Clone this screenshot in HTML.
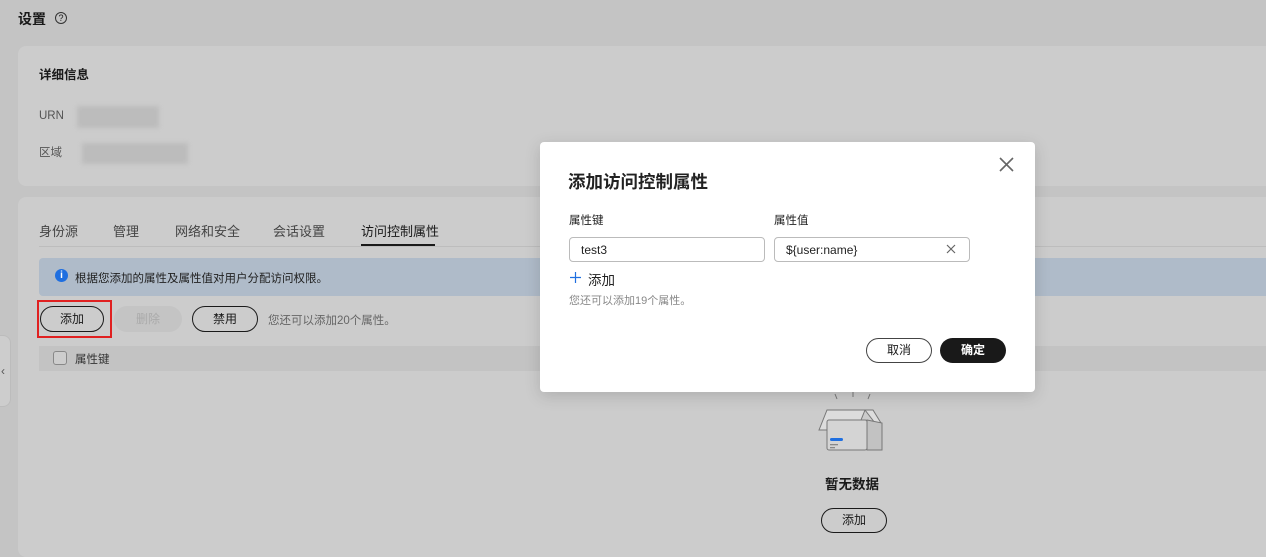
<!DOCTYPE html>
<html><head><meta charset="utf-8"><style>
*{margin:0;padding:0;box-sizing:border-box}
body{width:1266px;height:539px;overflow:hidden;background:#c4c4c4;font-family:"Liberation Sans","Noto Sans CJK SC",sans-serif;color:#191919;position:relative;font-size:12px}
.a{position:absolute}
.card{background:#cccccc;border-radius:8px}
.blur{background:#bcbcbc;filter:blur(2px)}
.btn{border:1px solid #1a1a1a;border-radius:14px;text-align:center;font-size:12px}
.tab{font-size:13px;color:#444;top:221px}
</style></head><body>
<div class="a" style="left:18px;top:9px;font-size:14px;font-weight:bold">设置</div>
<div class="a" style="left:55px;top:12px;width:12px;height:12px;border:1px solid #333;border-radius:50%;font-size:9px;line-height:10px;text-align:center">?</div>

<div class="a card" style="left:18px;top:46px;width:1260px;height:140px"></div>
<div class="a" style="left:39px;top:64px;font-size:12.5px;font-weight:bold">详细信息</div>
<div class="a" style="left:39px;top:110px;color:#555;font-size:11.5px">URN</div>
<div class="a blur" style="left:77px;top:106px;width:82px;height:22px"></div>
<div class="a" style="left:39px;top:144px;color:#555;font-size:11.5px">区域</div>
<div class="a blur" style="left:82px;top:143px;width:106px;height:21px"></div>

<div class="a card" style="left:18px;top:197px;width:1260px;height:360px"></div>
<div class="a tab" style="left:39px">身份源</div>
<div class="a tab" style="left:113px">管理</div>
<div class="a tab" style="left:175px">网络和安全</div>
<div class="a tab" style="left:273px">会话设置</div>
<div class="a tab" style="left:361px;color:#191919">访问控制属性</div>
<div class="a" style="left:39px;top:246px;width:1227px;height:1px;background:#bdbdbd"></div>
<div class="a" style="left:361px;top:244px;width:74px;height:2px;background:#191919"></div>
<div class="a" style="left:39px;top:258px;width:1227px;height:38px;background:#afbbc9;border-radius:4px 0 0 4px"></div>
<div class="a" style="left:55px;top:269px;width:13px;height:13px;border-radius:50%;background:#1f6fe0;color:#fff;font-size:10px;font-weight:bold;text-align:center;line-height:13px">i</div>
<div class="a" style="left:75px;top:270px;font-size:11.5px;color:#222">根据您添加的属性及属性值对用户分配访问权限。</div>
<div class="a" style="left:37px;top:300px;width:75px;height:38px;border:2px solid #e02020"></div>
<div class="a btn" style="left:40px;top:306px;width:64px;height:26px;line-height:24px">添加</div>
<div class="a" style="left:114px;top:306px;width:68px;height:26px;border-radius:14px;background:#c4c4c4;color:#aaa;text-align:center;line-height:26px">删除</div>
<div class="a btn" style="left:192px;top:306px;width:66px;height:26px;line-height:24px">禁用</div>
<div class="a" style="left:268px;top:312px;color:#666;font-size:11.5px">您还可以添加20个属性。</div>
<div class="a" style="left:39px;top:346px;width:1227px;height:25px;background:#c3c3c3"></div>
<div class="a" style="left:53px;top:351px;width:14px;height:14px;border:1px solid #888;border-radius:3px;background:#cdcdcd"></div>
<div class="a" style="left:75px;top:351px;color:#333;font-size:11.5px">属性键</div>
<div class="a" style="left:-10px;top:335px;width:21px;height:72px;background:#cdcdcd;border-radius:8px;border:1px solid #bcbcbc"></div>
<div class="a" style="left:1px;top:364px;font-size:12px;color:#555">‹</div>

<svg class="a" style="left:815px;top:390px" width="78" height="66" viewBox="0 0 78 66">
<g stroke="#777" fill="none" stroke-width="1"><path d="M20 4l2 5M38 2v5M55 4l-2 5"/>
<path d="M4 40L12 20H50L42 40Z" fill="#ddd"/><path d="M50 20L58 20 66 33 60 33Z" fill="#ddd"/>
<rect x="12" y="30" width="40" height="30" rx="2" fill="#d4d4d4"/><path d="M52 30V60H67V33Z" fill="#c2c2c2"/></g>
<rect x="15" y="48" width="13" height="3" rx="1.5" fill="#1f6fe0"/><rect x="15" y="54" width="8" height="1.3" fill="#888"/><rect x="15" y="57" width="5" height="1.3" fill="#888"/>
</svg>
<div class="a" style="left:825px;top:473px;font-size:13.5px;font-weight:bold">暂无数据</div>
<div class="a btn" style="left:821px;top:508px;width:66px;height:25px;line-height:23px">添加</div>

<div class="a" style="left:540px;top:142px;width:495px;height:250px;background:#fff;border-radius:4px;box-shadow:0 4px 16px rgba(0,0,0,.15)">
<div class="a" style="left:28px;top:27px;font-size:17.5px;font-weight:bold;color:#222">添加访问控制属性</div>
<svg class="a" style="left:459px;top:15px" width="15" height="15"><path d="M1 1L14 14M14 1L1 14" stroke="#666" stroke-width="1.6"/></svg>
<div class="a" style="left:29px;top:70px;color:#222;font-size:11.5px">属性键</div>
<div class="a" style="left:234px;top:70px;color:#222;font-size:11.5px">属性值</div>
<div class="a" style="left:29px;top:95px;width:196px;height:25px;border:1px solid #bbb;border-radius:4px;padding:5px 11px;color:#222">test3</div>
<div class="a" style="left:234px;top:95px;width:196px;height:25px;border:1px solid #bbb;border-radius:4px;padding:5px 11px;color:#222">${user:name}</div>
<svg class="a" style="left:406px;top:102px" width="10" height="10"><path d="M1 1L9 9M9 1L1 9" stroke="#666" stroke-width="1.2"/></svg>
<svg class="a" style="left:30px;top:130px" width="11" height="11"><path d="M5.5 0V11M0 5.5H11" stroke="#1f6fe0" stroke-width="1.2"/></svg>
<div class="a" style="left:48px;top:127px;font-size:13.5px;color:#222">添加</div>
<div class="a" style="left:29px;top:150px;color:#888;font-size:11px">您还可以添加19个属性。</div>
<div class="a btn" style="left:326px;top:196px;width:66px;height:25px;line-height:23px;border-color:#444">取消</div>
<div class="a" style="left:400px;top:196px;width:66px;height:25px;line-height:25px;border-radius:13px;background:#191919;color:#fff;text-align:center;font-weight:bold">确定</div>
</div>
</body></html>
